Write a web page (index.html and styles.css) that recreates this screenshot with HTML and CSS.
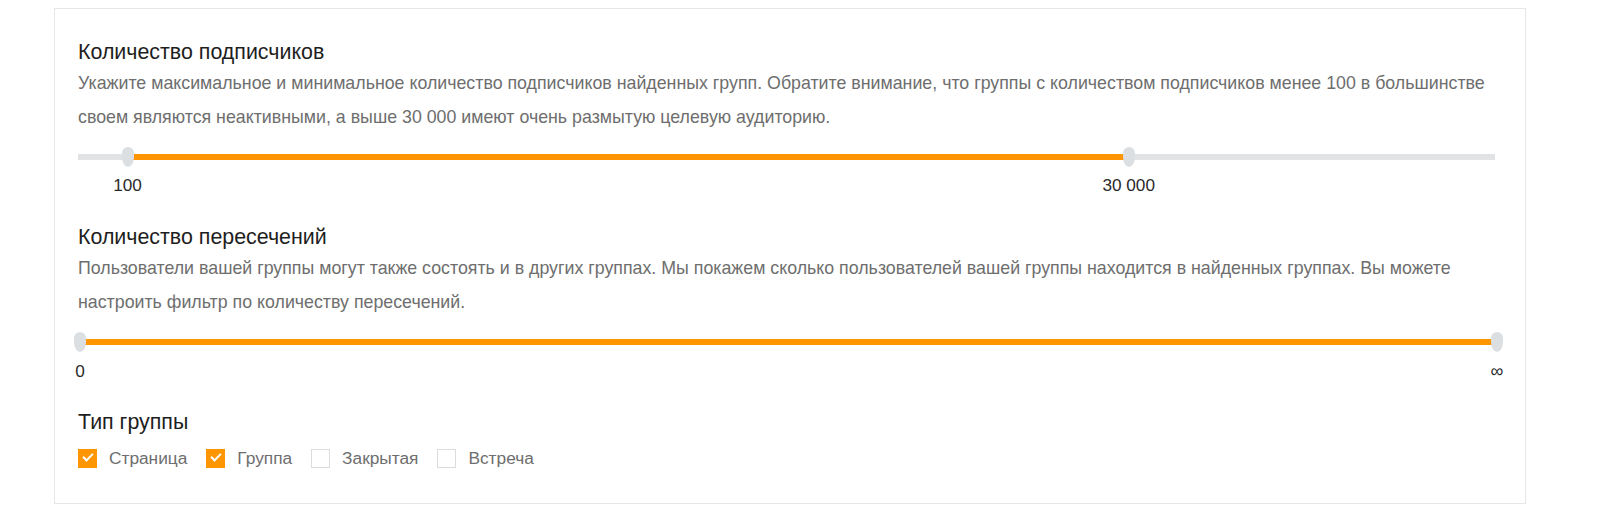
FILE: index.html
```html
<!DOCTYPE html>
<html lang="ru">
<head>
    <meta charset="UTF-8">
    <title>Фильтр групп</title>
    <link rel="stylesheet" href="styles.css">
</head>
<body>

<div class="card">

    <div class="section">
        <h3>Количество подписчиков</h3>
        <p class="desc">Укажите максимальное и минимальное количество подписчиков найденных групп. Обратите внимание, что группы с количеством подписчиков менее 100 в большинстве<br>своем являются неактивными, а выше 30 000 имеют очень размытую целевую аудиторию.</p>

        <div class="slider">
            <div class="track"></div>
            <div class="fill" style="left: 3.5%; right: 25.85%;"></div>
            <div class="thumb" style="left: 3.5%;"></div>
            <div class="thumb" style="left: 74.15%;"></div>
        </div>
        <div class="scale">
            <span style="left: 3.5%;">100</span>
            <span style="left: 74.15%;">30 000</span>
        </div>
    </div>

    <div class="section">
        <h3>Количество пересечений</h3>
        <p class="desc">Пользователи вашей группы могут также состоять и в других группах. Мы покажем сколько пользователей вашей группы находится в найденных группах. Вы можете<br>настроить фильтр по количеству пересечений.</p>

        <div class="slider slider-wide">
            <div class="track"></div>
            <div class="fill" style="left: 0%; right: 0%;"></div>
            <div class="thumb" style="left: 0%;"></div>
            <div class="thumb" style="left: 100%;"></div>
        </div>
        <div class="scale scale-wide">
            <span style="left: 0%;">0</span>
            <span class="inf" style="left: 100%;">&infin;</span>
        </div>
    </div>

    <div class="section section-types">
        <h3>Тип группы</h3>
        <div class="checks">
            <label class="check"><span class="box checked"></span>Страница</label>
            <label class="check"><span class="box checked"></span>Группа</label>
            <label class="check"><span class="box"></span>Закрытая</label>
            <label class="check"><span class="box"></span>Встреча</label>
        </div>
    </div>

</div>

</body>
</html>
```

FILE: styles.css
```css
body {
    margin: 0;
    font-family: "Liberation Sans", Arial, sans-serif;
    background-color: #fff;
}

.card {
    box-sizing: border-box;
    width: 1472px;
    margin: 8px 0 0 54px;
    padding: 31px 23px 35px 23px;
    border: 1px solid #e6e6e6;
}

.section + .section {
    margin-top: 30px;
}

.section.section-types {
    margin-top: 29px;
}

h3 {
    margin: 0;
    font-size: 21.4px;
    font-weight: normal;
    line-height: 24px;
    color: #1e1e1e;
}

.desc {
    margin: 2px 0 0;
    font-size: 17.8px;
    line-height: 34px;
    color: #6e6e6e;
    white-space: nowrap;
}

.slider {
    position: relative;
    height: 20px;
    margin: 13px 7px 0 0;
}

.slider.slider-wide {
    margin-left: 2px;
    margin-right: 5px;
}

.track {
    position: absolute;
    left: 0;
    right: 0;
    top: 7px;
    height: 6px;
    background-color: #e1e3e4;
}

.fill {
    position: absolute;
    top: 7px;
    height: 6px;
    background-color: #ff9500;
}

.thumb {
    position: absolute;
    top: 0;
    width: 12px;
    height: 20px;
    margin-left: -6px;
    background-color: #dcdfe1;
    border-radius: 6px 6px 6px 6px / 6px 6px 10px 10px;
}

.scale {
    position: relative;
    height: 20px;
    margin-top: 8px;
    margin-right: 7px;
    font-size: 17.2px;
    line-height: 20px;
    color: #2a2a2a;
}

.scale.scale-wide {
    margin: 9px 5px 0 2px;
}

.scale span {
    position: absolute;
    top: 0;
    transform: translateX(-50%);
    white-space: nowrap;
}

.scale .inf {
    font-size: 18px;
}

.checks {
    display: flex;
    gap: 19px;
    margin-top: 14px;
}

.check {
    display: flex;
    align-items: center;
    gap: 12px;
    font-size: 17.3px;
    line-height: 20px;
    color: #6e6e6e;
}

.box {
    box-sizing: border-box;
    width: 19px;
    height: 19px;
    border: 1px solid #dcdcdc;
    background-color: #fff;
    position: relative;
}

.box.checked {
    border-color: #ff9500;
    background-color: #ff9500;
}

.box.checked::after {
    content: "";
    position: absolute;
    left: 4px;
    top: 3px;
    width: 8px;
    height: 4px;
    border-left: 2px solid #fff;
    border-bottom: 2px solid #fff;
    transform: rotate(-45deg);
}
```
